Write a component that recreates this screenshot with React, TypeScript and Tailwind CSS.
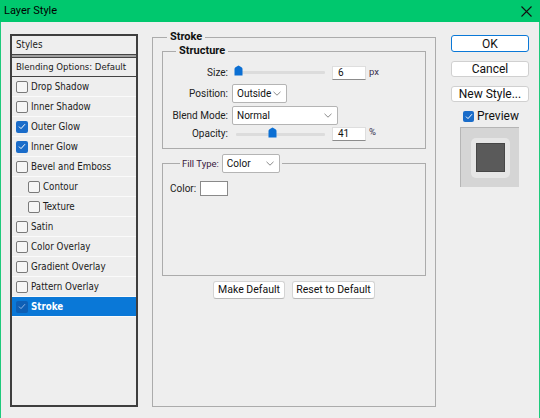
import React from "react";

const LIST = { fontFamily: '"DejaVu Sans Condensed", "Liberation Sans", Arial, sans-serif' } as const;
const MID = { fontFamily: 'Roboto, "Liberation Sans", Arial, sans-serif' } as const;
const UI = { fontFamily: 'Roboto, "Liberation Sans", Arial, sans-serif' } as const;

function CheckMark({ color }: { color: string }) {
  return (
    <svg width="8" height="7" viewBox="0 0 8 7">
      <path d="M1 3.6 L3 5.6 L7 1.2" fill="none" stroke={color} strokeWidth="1" />
    </svg>
  );
}

function Check({ checked, selected }: { checked?: boolean; selected?: boolean }) {
  if (selected) {
    return (
      <span className="w-[12px] h-[12px] rounded-[2px] bg-[#0e5fb5] flex items-center justify-center shrink-0">
        <CheckMark color="#8fb7e6" />
      </span>
    );
  }
  if (checked) {
    return (
      <span className="w-[12px] h-[12px] rounded-[2px] bg-[#1a6cc9] flex items-center justify-center shrink-0">
        <CheckMark color="#ffffff" />
      </span>
    );
  }
  return <span className="w-[12px] h-[12px] rounded-[2px] border border-[#7a7a7a] bg-[#f6f6f6] shrink-0" />;
}

function Row({ label, checked, indent, selected }: { label: string; checked?: boolean; indent?: boolean; selected?: boolean }) {
  return (
    <div
      className={
        "h-[20px] flex items-center gap-[3px] border-b border-[#fafafa] whitespace-nowrap " +
        (indent ? "pl-[16px] " : "pl-[4px] ") +
        (selected ? "bg-[#0a78d7] text-white font-bold" : "text-[#1a1a1a]")
      }
    >
      <Check checked={checked} selected={selected} />
      <span className="text-[9.7px] leading-none">{label}</span>
    </div>
  );
}

function Chevron() {
  return (
    <svg width="8" height="5" viewBox="0 0 8 5" className="shrink-0">
      <path d="M0.5 0.8 L4 4.2 L7.5 0.8" fill="none" stroke="#8a8a8a" strokeWidth="1" />
    </svg>
  );
}

function Select({ value, w }: { value: string; w: string }) {
  return (
    <div className={"h-full bg-white border border-[#b4b4b4] rounded-[2px] flex items-center justify-between pl-[4px] pr-[5px] whitespace-nowrap " + w}>
      <span className="text-[10px] leading-none text-[#111]">{value}</span>
      <Chevron />
    </div>
  );
}

function Thumb() {
  return (
    <svg width="9" height="11" viewBox="0 0 9 11" className="shrink-0">
      <path d="M0.5 10.5 V4 Q0.5 3 1.5 2.3 L4.5 0.5 L7.5 2.3 Q8.5 3 8.5 4 V10.5 Z" fill="#0b6fd3" />
    </svg>
  );
}

function Slider({ pct }: { pct: number }) {
  return (
    <div className="w-[93px] h-full flex items-center">
      <div className="relative w-full h-[3px] bg-[#dcdcdc] rounded-[1px] ml-[4px]">
        <div className="absolute top-[-6px]" style={{ left: `${pct * 0.88 - 4}px` }}>
          <Thumb />
        </div>
      </div>
    </div>
  );
}

function NumInput({ value }: { value: string }) {
  return (
    <div className="w-[34px] h-[14px] bg-white border border-[#dedede] border-b-[#8c8c8c] flex items-center pl-[5px] ml-[7px]">
      <span className="text-[10px] leading-none text-[#111]">{value}</span>
    </div>
  );
}

function Label({ children }: { children: React.ReactNode }) {
  return <div className="w-[65px] text-right mr-[4px] text-[10px] leading-none text-[#222] whitespace-nowrap">{children}</div>;
}

function Btn({ children, w }: { children: React.ReactNode; w: string }) {
  return (
    <div className={"h-[18px] bg-white border border-[#d4d4d4] border-b-[#b8b8b8] rounded-[3px] flex items-center justify-center text-[10.5px] text-[#111] whitespace-nowrap " + w}>
      {children}
    </div>
  );
}

export default function App() {
  return (
    <div className="w-[540px] h-[418px] flex flex-col bg-[#eeeeee] overflow-hidden" style={MID}>
      {/* Title bar */}
      <div className="h-[22px] bg-[#00c86e] flex items-center justify-between pl-[4px] pr-[8px] shrink-0">
        <span className="text-[11px] text-[#000]" style={UI}>Layer Style</span>
        <svg width="11" height="11" viewBox="0 0 11 11">
          <path d="M0.5 0.5 L10.5 10.5 M10.5 0.5 L0.5 10.5" stroke="#111" strokeWidth="1.1" />
        </svg>
      </div>

      {/* Body */}
      <div className="flex-1 flex items-start border-x border-[#1fca7c] pl-[9px]">
        {/* Left styles list */}
        <div className="mt-[12px] w-[128px] h-[373px] border-2 border-[#3e3e3e] bg-[#eeeeee] flex flex-col" style={LIST}>
          <div className="h-[19px] flex items-center pl-[4px] text-[9.7px] leading-none text-[#1a1a1a] border-b border-[#444]">Styles</div>
          <div className="h-[2px] bg-[#a0a0a0]" />
          <div className="h-[20px] flex items-center pl-[4px] text-[9.5px] leading-none text-[#1a1a1a] border-t border-b border-[#444] whitespace-nowrap">
            Blending Options: Default
          </div>
          <Row label="Drop Shadow" />
          <Row label="Inner Shadow" />
          <Row label="Outer Glow" checked />
          <Row label="Inner Glow" checked />
          <Row label="Bevel and Emboss" />
          <Row label="Contour" indent />
          <Row label="Texture" indent />
          <Row label="Satin" />
          <Row label="Color Overlay" />
          <Row label="Gradient Overlay" />
          <Row label="Pattern Overlay" />
          <Row label="Stroke" checked selected />
        </div>

        {/* Middle: Stroke */}
        <fieldset className="mt-[8px] ml-[14px] w-[284px] h-[377px] border border-[#ababab] px-[9px]">
          <legend className="ml-[5px] px-[3px] text-[11px] leading-[14px] font-bold text-[#111]">Stroke</legend>

          <fieldset className="w-[264px] border border-[#ababab] pb-[7px]">
            <legend className="ml-[13px] px-[3px] text-[11px] leading-[14px] font-bold text-[#111]">Structure</legend>
            <div className="mt-[7px] h-[15px] flex items-center">
              <Label>Size:</Label>
              <Slider pct={2} />
              <NumInput value="6" />
              <span className="ml-[3px] text-[9.5px] text-[#3a3050] leading-none self-start mt-[2px]">px</span>
            </div>
            <div className="mt-[4px] h-[19px] flex items-center">
              <Label>Position:</Label>
              <Select value="Outside" w="w-[55px]" />
            </div>
            <div className="mt-[3px] h-[19px] flex items-center">
              <Label>Blend Mode:</Label>
              <Select value="Normal" w="w-[106px]" />
            </div>
            <div className="mt-[2px] h-[14px] flex items-center">
              <Label>Opacity:</Label>
              <Slider pct={41} />
              <NumInput value="41" />
              <span className="ml-[3px] text-[9.5px] text-[#3a3050] leading-none self-start mt-[0px]">%</span>
            </div>
          </fieldset>

          <fieldset className="mt-[5px] w-[264px] h-[122px] border border-[#ababab] pl-[7px]">
            <legend className="ml-[10px] px-[2px] h-[19px] flex items-center">
              <span className="text-[9.5px] leading-none text-[#3a2040] mr-[3px] whitespace-nowrap">Fill Type:</span>
              <div className="h-[19px]">
                <Select value="Color" w="w-[58px]" />
              </div>
            </legend>
            <div className="mt-[8px] flex items-center">
              <span className="text-[10px] leading-none text-[#222] w-[30px]">Color:</span>
              <div className="w-[28px] h-[15px] bg-white border border-[#8a8a8a]" />
            </div>
          </fieldset>

          <div className="mt-[5px] flex justify-center gap-[7px]">
            <Btn w="w-[72px]">Make Default</Btn>
            <Btn w="w-[83px]">Reset to Default</Btn>
          </div>
        </fieldset>

        {/* Right column */}
        <div className="ml-[15px] w-[78px] flex flex-col" style={UI}>
          <div className="mt-[13px] h-[17px] bg-white border border-[#0a78d7] rounded-[3px] flex items-center justify-center text-[12px] text-[#111] leading-none">OK</div>
          <div className="mt-[9px] h-[16px] bg-white border border-[#d0d0d0] rounded-[3px] flex items-center justify-center text-[12px] text-[#111] leading-none">Cancel</div>
          <div className="mt-[9px] h-[16px] bg-white border border-[#d0d0d0] rounded-[3px] flex items-center justify-center text-[12px] text-[#111] leading-none">New Style...</div>
          <div className="mt-[8px] h-[12px] flex items-center pl-[12px] gap-[3px]">
            <span className="w-[11px] h-[11px] rounded-[2px] bg-[#1a6cc9] flex items-center justify-center">
              <CheckMark color="#ffffff" />
            </span>
            <span className="text-[12px] leading-none text-[#111]">Preview</span>
          </div>
          <div className="mt-[5px] ml-[9px] w-[59px] h-[60px] bg-[#d5d5d5] border-t border-l border-[#b5b5b5] flex items-center justify-center">
            <div className="w-[39px] h-[40px] bg-[#e6e6e6] rounded-[5px] flex items-center justify-center">
              <div className="w-[29px] h-[29px] bg-[#5a5a5a] border border-[#464646]" />
            </div>
          </div>
        </div>
      </div>
    </div>
  );
}
